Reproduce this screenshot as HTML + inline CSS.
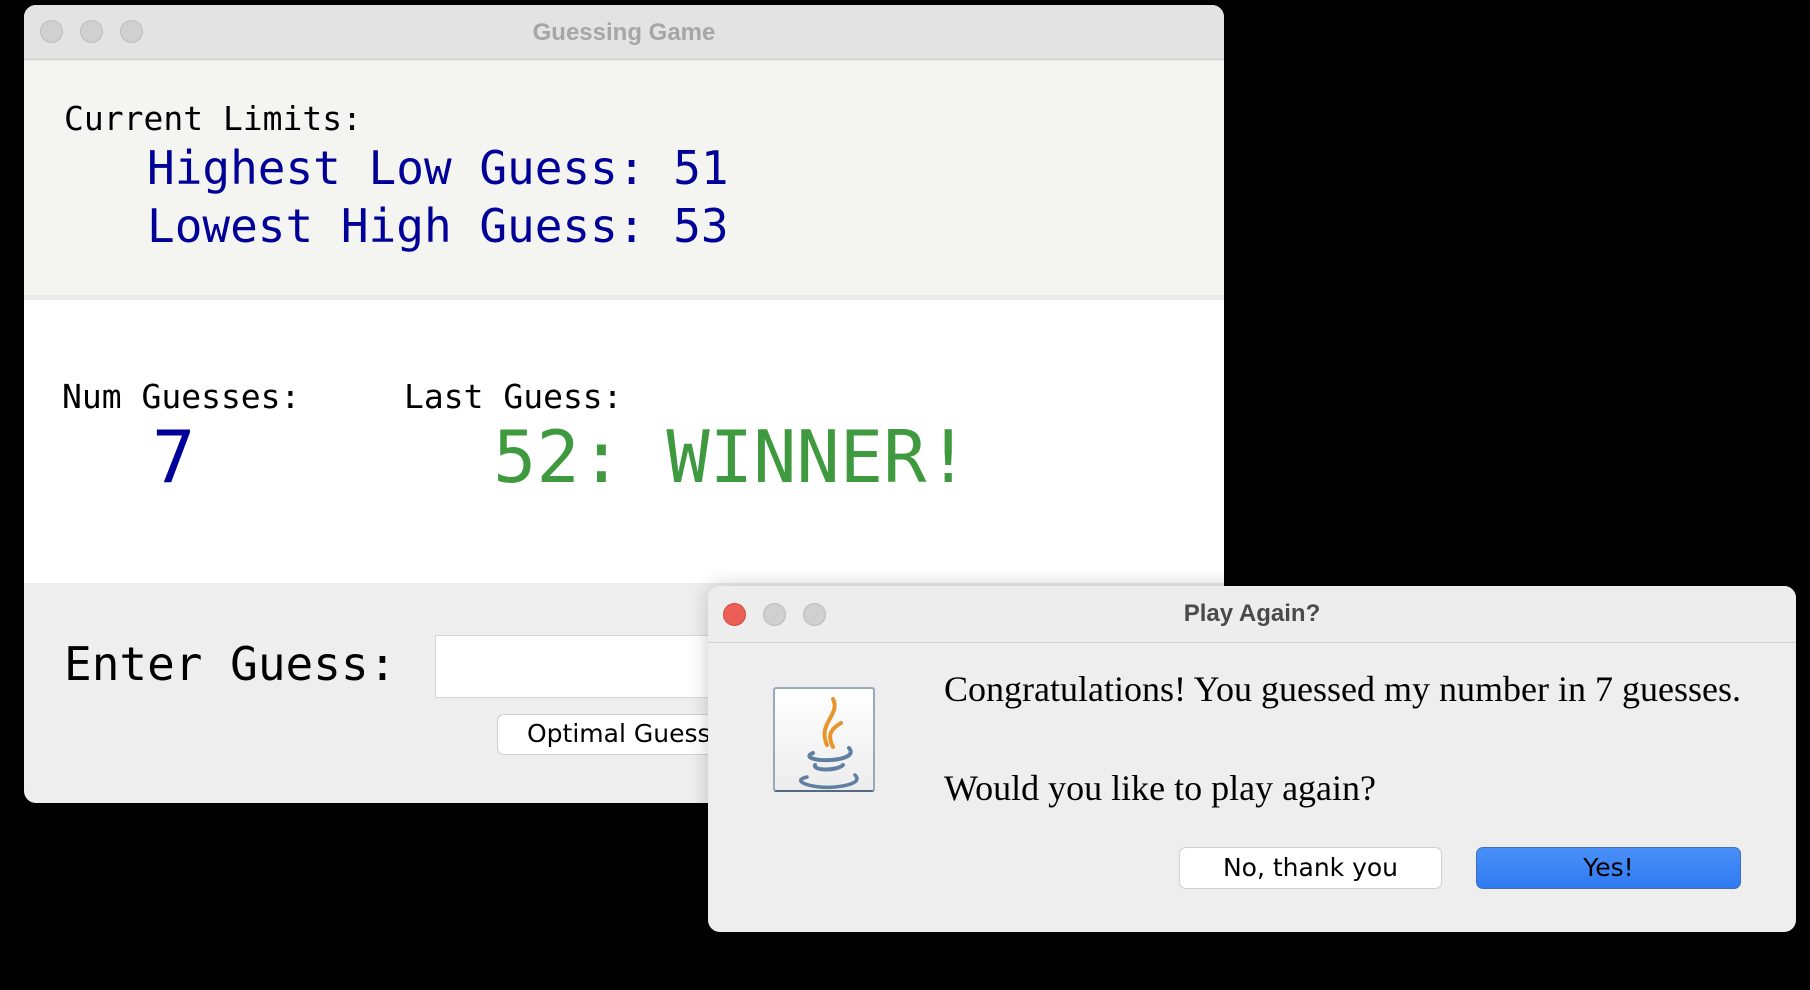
<!DOCTYPE html>
<html><head><meta charset="utf-8"><style>
*{margin:0;padding:0;box-sizing:border-box}
body{width:1810px;height:990px;background:#000;position:relative;overflow:hidden;font-family:"Liberation Sans",sans-serif}
.abs{position:absolute;white-space:nowrap}
.mono{font-family:"DejaVu Sans Mono","Liberation Mono",monospace}
.win{position:absolute;left:24px;top:5px;width:1200px;height:798px;border-radius:12px;overflow:hidden;background:#eeeeee}
.tl{position:absolute;width:23px;height:23px;border-radius:50%;background:#d0d0d0;border:1px solid #bcbcbc}
</style></head><body>
<div class="win">
  <div class="abs" style="left:0;top:0;width:1200px;height:55px;background:#e3e3e3;border-bottom:1px solid #cfcfcf"></div>
  <div class="tl" style="left:16px;top:15px"></div>
  <div class="tl" style="left:56px;top:15px"></div>
  <div class="tl" style="left:96px;top:15px"></div>
  <div class="abs" style="left:0;width:1200px;top:14px;text-align:center;font-weight:bold;font-size:24px;color:#a6a6a6">Guessing Game</div>
  <div class="abs" style="left:0;top:56px;width:1200px;height:234px;background:#f4f4f0"></div>
  <div class="abs" style="left:0;top:290px;width:1200px;height:5px;background:#ebebeb"></div>
  <div class="abs" style="left:0;top:295px;width:1200px;height:283px;background:#fff"></div>
  <div class="abs mono" style="left:40px;top:94px;font-size:33px;color:#000">Current Limits:</div>
  <div class="abs mono" style="left:123px;top:134px;font-size:46px;color:#000099;line-height:58px">Highest Low Guess: 51<br>Lowest High Guess: 53</div>
  <div class="abs mono" style="left:38px;top:372px;font-size:33px;color:#000">Num Guesses:</div>
  <div class="abs mono" style="left:380px;top:372px;font-size:33px;color:#000">Last Guess:</div>
  <div class="abs mono" style="left:128px;top:410px;font-size:72px;color:#000099">7</div>
  <div class="abs mono" style="left:469px;top:410px;font-size:72px;color:#3f9a3f">52: WINNER!</div>
  <div class="abs mono" style="left:40px;top:632px;font-size:46px;color:#000">Enter Guess:</div>
  <div class="abs" style="left:411px;top:630px;width:400px;height:63px;background:#fff;border:1px solid #d6d6d6"></div>
  <div class="abs" style="left:473px;top:709px;width:300px;height:41px;background:#fff;border:1px solid #d0d0d0;border-radius:7px;font-family:'DejaVu Sans',sans-serif;font-size:25px;padding:4px 0 0 29px;color:#000">Optimal Guess</div>
</div>
<div class="abs" style="left:708px;top:586px;width:1088px;height:346px;border-radius:12px;background:#eeeeee;overflow:hidden;box-shadow:0 0 20px rgba(0,0,0,0.2)">
  <div class="abs" style="left:0;top:0;width:1088px;height:57px;background:#ededed;border-bottom:1px solid #d2d2d2"></div>
  <div class="tl" style="left:15px;top:17px;background:#ec5f57;border-color:#d4483f"></div>
  <div class="tl" style="left:55px;top:17px"></div>
  <div class="tl" style="left:95px;top:17px"></div>
  <div class="abs" style="left:0;width:1088px;top:14px;text-align:center;font-weight:bold;font-size:24px;color:#4a4a4a">Play Again?</div>
  <div class="abs" style="left:65px;top:101px;width:102px;height:105px;border:2px solid #9aa9ba;border-bottom-color:#556a80;border-radius:3px;background:linear-gradient(#fff,#ececec)">
    <svg width="98" height="101" viewBox="0 0 98 101" style="position:absolute;left:0;top:0">
      <path d="M58 10 C66 26 42 34 52 56" stroke="#e7962b" stroke-width="4" fill="none" stroke-linecap="round"/>
      <path d="M66 34 C52 42 54 50 58 58" stroke="#e7962b" stroke-width="4" fill="none" stroke-linecap="round"/>
      <path d="M38 64 C28 68 40 72 56 71 C70 70 80 66 74 59" stroke="#5f7fa2" stroke-width="4" fill="none" stroke-linecap="round"/>
      <path d="M40 76 C38 82 62 82 68 76" stroke="#5f7fa2" stroke-width="4" fill="none" stroke-linecap="round"/>
      <path d="M32 88 C14 92 38 100 60 98 C78 96 86 92 80 86" stroke="#5f7fa2" stroke-width="3.5" fill="none" stroke-linecap="round"/>
    </svg>
  </div>
  <div class="abs" style="left:236px;top:82px;font-family:'Liberation Serif',serif;font-size:36px;color:#000">Congratulations! You guessed my number in 7 guesses.</div>
  <div class="abs" style="left:236px;top:181px;font-family:'Liberation Serif',serif;font-size:36px;color:#000">Would you like to play again?</div>
  <div class="abs" style="left:471px;top:261px;width:263px;height:42px;background:#fff;border:1px solid #d0d0d0;border-radius:7px;font-family:'DejaVu Sans',sans-serif;font-size:25px;text-align:center;line-height:40px;color:#000">No, thank you</div>
  <div class="abs" style="left:768px;top:261px;width:265px;height:42px;background:linear-gradient(#4a90f8,#2f7af2);border:1px solid #3e6fb8;border-radius:7px;font-family:'DejaVu Sans',sans-serif;font-size:25px;text-align:center;line-height:40px;color:#000">Yes!</div>
</div>
</body></html>
